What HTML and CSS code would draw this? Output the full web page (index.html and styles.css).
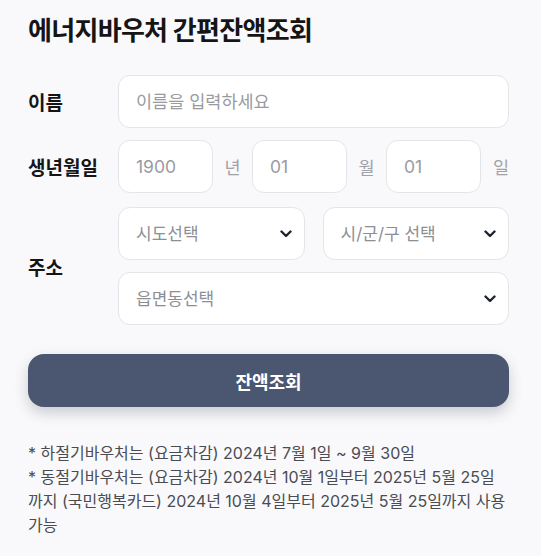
FILE: index.html
```html
<!DOCTYPE html>
<html lang="ko">
<head>
<meta charset="utf-8">
<title>에너지바우처 간편잔액조회</title>
<link rel="stylesheet" href="styles.css">
</head>
<body>
<main class="page">
  <h1 class="title">에너지바우처 간편잔액조회</h1>
  <form class="form">
    <div class="row">
      <label class="label">이름</label>
      <input class="field" type="text" placeholder="이름을 입력하세요">
    </div>
    <div class="row">
      <label class="label">생년월일</label>
      <div class="date">
        <input class="field small" type="text" placeholder="1900">
        <span class="unit">년</span>
        <input class="field small" type="text" placeholder="01">
        <span class="unit">월</span>
        <input class="field small" type="text" placeholder="01">
        <span class="unit">일</span>
      </div>
    </div>
    <div class="row addr-row">
      <label class="label">주소</label>
      <div class="addr">
        <div class="sel-wrap">
          <select class="field sel"><option>시도선택</option></select>
          <svg class="chev" viewBox="0 0 12 8" width="12" height="8"><path d="M1.5 1.5 L6 6 L10.5 1.5" fill="none" stroke="#1f2430" stroke-width="2.4" stroke-linecap="round" stroke-linejoin="round"/></svg>
        </div>
        <div class="sel-wrap">
          <select class="field sel"><option>시/군/구 선택</option></select>
          <svg class="chev" viewBox="0 0 12 8" width="12" height="8"><path d="M1.5 1.5 L6 6 L10.5 1.5" fill="none" stroke="#1f2430" stroke-width="2.4" stroke-linecap="round" stroke-linejoin="round"/></svg>
        </div>
        <div class="sel-wrap wide">
          <select class="field sel"><option>읍면동선택</option></select>
          <svg class="chev" viewBox="0 0 12 8" width="12" height="8"><path d="M1.5 1.5 L6 6 L10.5 1.5" fill="none" stroke="#1f2430" stroke-width="2.4" stroke-linecap="round" stroke-linejoin="round"/></svg>
        </div>
      </div>
    </div>
    <button class="btn" type="button">잔액조회</button>
  </form>
  <div class="notes">
    <p>* 하절기바우처는 (요금차감) 2024년 7월 1일 ~ 9월 30일</p>
    <p>* 동절기바우처는 (요금차감) 2024년 10월 1일부터 2025년 5월 25일까지 (국민행복카드) 2024년 10월 4일부터 2025년 5월 25일까지 사용 가능</p>
  </div>
</main>
</body>
</html>
```
FILE: styles.css
```css
html, body {
  margin: 0;
  padding: 0;
  background: #f9f9fb;
}
body {
  font-family: "Inter", "Noto Sans CJK KR", sans-serif;
  color: #1a1a1a;
}
.page {
  padding: 15px 32px 20px 28px;
}
.title {
  margin: 0;
  font-size: 26px;
  line-height: 32px;
  font-weight: 700;
  letter-spacing: -0.7px;
  color: #151515;
}
.form {
  margin-top: 28px;
  display: flex;
  flex-direction: column;
  gap: 12px;
}
.row {
  display: grid;
  grid-template-columns: 90px 1fr;
  align-items: center;
}
.addr-row {
  margin-top: 2px;
}
.label {
  font-size: 19px;
  font-weight: 700;
  letter-spacing: 0;
  color: #151515;
}
.field {
  box-sizing: border-box;
  height: 53px;
  width: 100%;
  border: 1px solid #e4e5e9;
  border-radius: 12px;
  background: #fff;
  padding: 0 17px;
  font-family: "Inter", "Noto Sans CJK KR", sans-serif;
  font-size: 17.5px;
  color: #333;
  outline: none;
}
.field::placeholder {
  color: #999ba1;
}
.date {
  display: flex;
  align-items: center;
}
.small {
  width: 95px;
  flex: none;
}
.unit {
  width: 39px;
  flex: none;
  text-align: center;
  font-size: 17.5px;
  color: #a0a2a8;
}
.date .unit:last-child {
  width: 28px;
  text-align: right;
}
.addr {
  display: grid;
  grid-template-columns: 1fr 1fr;
  column-gap: 18px;
  row-gap: 12px;
}
.sel-wrap {
  position: relative;
}
.wide {
  grid-column: 1 / 3;
}
.sel {
  appearance: none;
  -webkit-appearance: none;
  color: #8d8f95;
  font-size: 17px;
  height: 53px;
}
.chev {
  position: absolute;
  right: 13px;
  top: 23px;
  pointer-events: none;
}
.btn {
  margin-top: 17px;
  height: 53px;
  width: 100%;
  border: none;
  border-radius: 16px;
  background: #4b5670;
  color: #fff;
  font-family: "Inter", "Noto Sans CJK KR", sans-serif;
  font-size: 18px;
  font-weight: 700;
  box-shadow: 0 6px 14px rgba(40, 45, 60, 0.22);
}
.notes {
  margin-top: 34px;
  font-size: 16px;
  line-height: 24px;
  color: #4a4c52;
}
.notes p {
  margin: 0;
}
```
